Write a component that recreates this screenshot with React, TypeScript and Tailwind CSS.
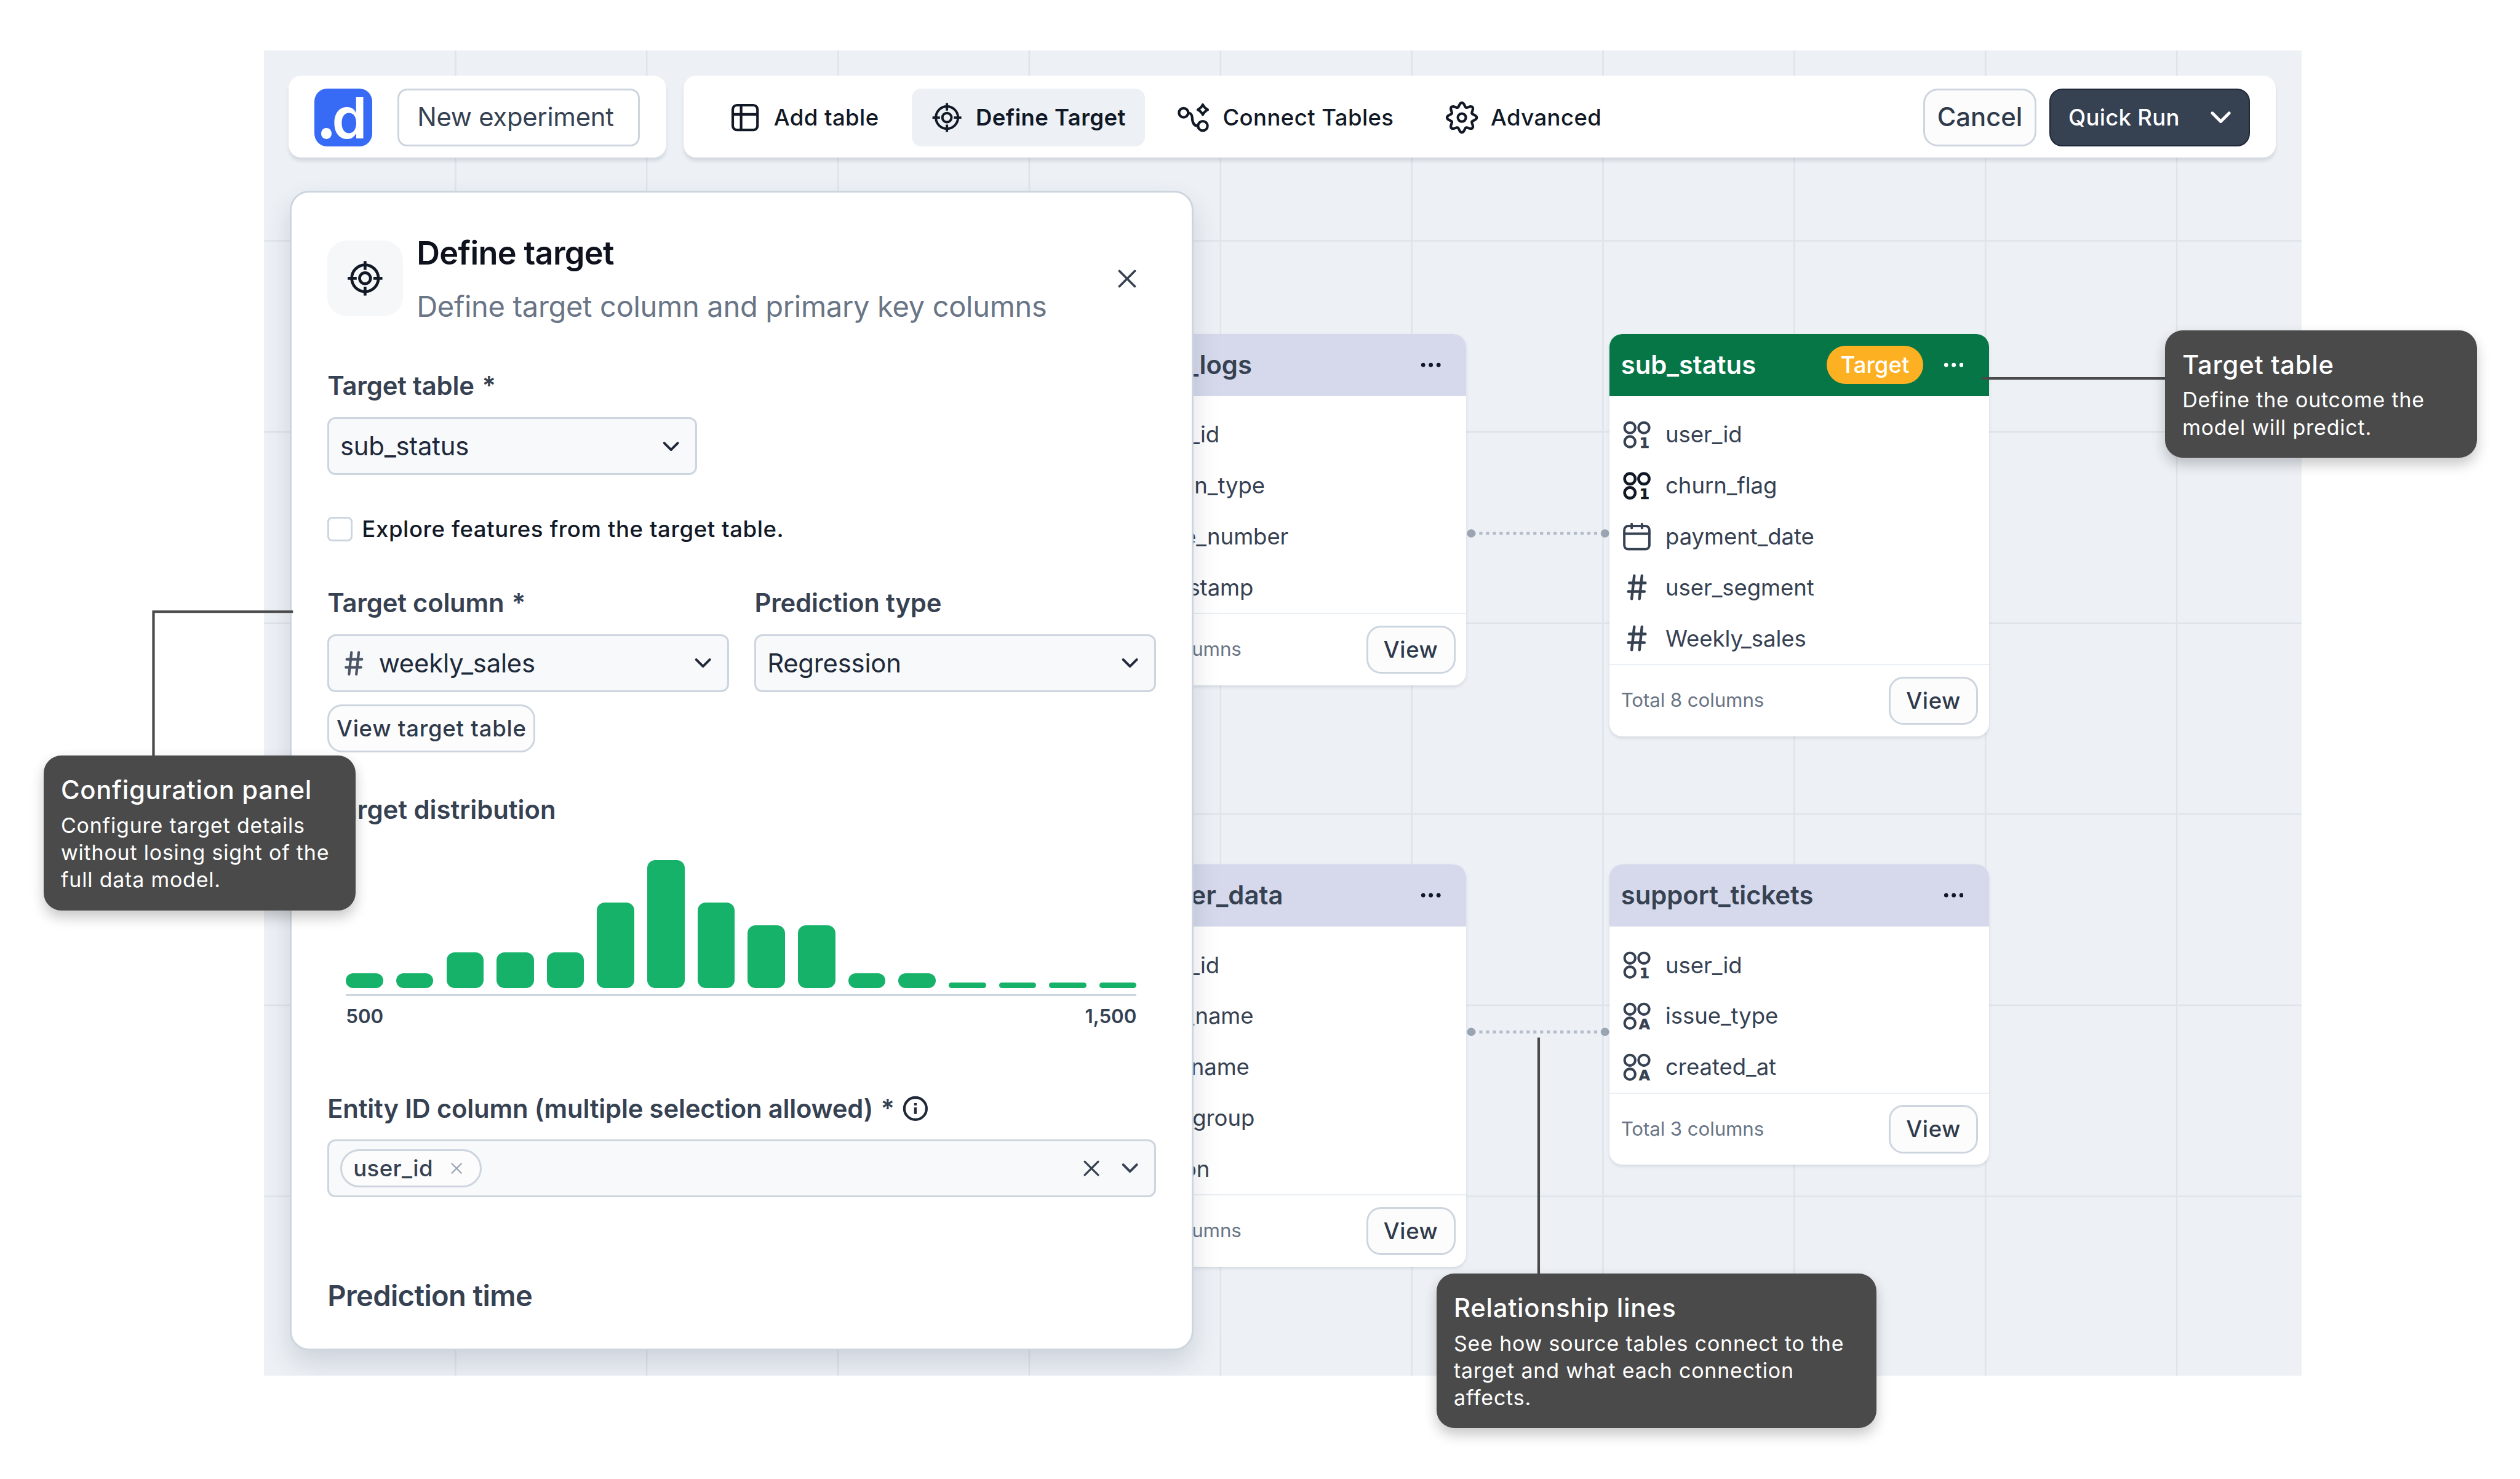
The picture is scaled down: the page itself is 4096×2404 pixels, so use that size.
import type { ReactNode } from 'react';

// Histogram of the target column, heights in px
const distribution = [9, 9, 22, 22, 22, 53, 79.5, 53, 39, 39, 9, 9, 3.3, 3.3, 3.3, 3.3];

type ColumnType = 'binary' | 'category' | 'date' | 'number';

interface Column {
  name: string;
  type: ColumnType;
  strong?: boolean;
}

interface TableCardProps {
  title: string;
  columns: Column[];
  total: number;
  isTarget?: boolean;
  className: string;
}

const subStatus: Column[] = [
  { name: 'user_id', type: 'binary' },
  { name: 'churn_flag', type: 'binary', strong: true },
  { name: 'payment_date', type: 'date' },
  { name: 'user_segment', type: 'number' },
  { name: 'Weekly_sales', type: 'number' },
];

const accessLogs: Column[] = [
  { name: 'user_id', type: 'binary' },
  { name: 'action_type', type: 'category' },
  { name: 'page_number', type: 'number' },
  { name: 'timestamp', type: 'date' },
];

const customerData: Column[] = [
  { name: 'user_id', type: 'binary' },
  { name: 'first_name', type: 'category' },
  { name: 'last_name', type: 'category' },
  { name: 'age_group', type: 'category' },
  { name: 'region', type: 'category' },
];

const supportTickets: Column[] = [
  { name: 'user_id', type: 'binary' },
  { name: 'issue_type', type: 'category' },
  { name: 'created_at', type: 'category' },
];

// Gear outline with 8 soft teeth
const gearPath =
  Array.from({ length: 160 }, (_, i) => {
    const a = (i / 160) * Math.PI * 2;
    const r = 8 + 1.25 * Math.cos(8 * a);
    return `${i === 0 ? 'M' : 'L'}${(10 + r * Math.cos(a)).toFixed(2)} ${(10 + r * Math.sin(a)).toFixed(2)}`;
  }).join('') + 'Z';

const TargetIcon = ({ className }: { className: string }) => (
  <svg viewBox="-12 -12 24 24" fill="none" stroke="currentColor" strokeWidth="1.8" className={className}>
    <circle r="8.3" />
    <circle r="3.4" />
    <path d="M0 -10.8V-5.2M0 10.8V5.2M-10.8 0H-5.2M10.8 0H5.2" />
  </svg>
);

const TableIcon = () => (
  <svg viewBox="0 0 20 20" fill="none" stroke="currentColor" strokeWidth="1.6" className="size-5">
    <rect x="2.3" y="2.3" width="15.4" height="15.4" rx="2.6" />
    <path d="M2.3 8H17.7M7.5 2.3V17.7" />
  </svg>
);

const ConnectIcon = () => (
  <svg viewBox="0 0 20 20" fill="none" stroke="currentColor" strokeWidth="1.6" strokeLinejoin="round" className="size-5">
    <circle cx="3.75" cy="7" r="2.85" />
    <circle cx="15.7" cy="15.2" r="2.95" />
    <path d="M6.6 7C8.1 7.2 9 8.3 9.1 10C9.2 13 10.2 15.2 12.7 15.2" />
    <path d="M15.7 2Q16.7 4.1 18.8 5.1Q16.7 6.1 15.7 8.2Q14.7 6.1 12.6 5.1Q14.7 4.1 15.7 2Z" />
  </svg>
);

const GearIcon = () => (
  <svg viewBox="0 0 20 20" fill="none" stroke="currentColor" strokeWidth="1.6" className="size-5 overflow-visible">
    <path d={gearPath} />
    <circle cx="10" cy="10" r="2.5" />
  </svg>
);

const ChevronDown = ({ className }: { className: string }) => (
  <svg viewBox="0 0 12 12" fill="none" stroke="currentColor" strokeWidth="1.5" strokeLinecap="round" strokeLinejoin="round" className={className}>
    <path d="M1.8 3.9L6 8.1L10.2 3.9" />
  </svg>
);

const CloseIcon = ({ className }: { className: string }) => (
  <svg viewBox="0 0 12 12" fill="none" stroke="currentColor" strokeWidth="1.5" strokeLinecap="round" className={className}>
    <path d="M1 1L11 11M11 1L1 11" />
  </svg>
);

const HashIcon = ({ className }: { className: string }) => (
  <svg viewBox="-9 -9 18 18" fill="none" stroke="currentColor" strokeWidth="1.7" strokeLinecap="round" className={className}>
    <path d="M-4.7 -2.65H5.3M-5.3 2.65H4.7M-1.6 -7.2L-3.2 7.2M3.2 -7.2L1.6 7.2" />
  </svg>
);

const ColumnIcon = ({ type, strong }: { type: ColumnType; strong?: boolean }) => {
  if (type === 'number') return <HashIcon className="size-[18px]" />;
  if (type === 'date') {
    return (
      <svg viewBox="0 0 18 18" fill="none" stroke="currentColor" strokeWidth="1.5" strokeLinecap="round" className="size-[18px]">
        <rect x="1.2" y="2.3" width="15.6" height="14.4" rx="2.4" />
        <path d="M1.2 7.1H16.8M5.8 1V3.6M12.2 1V3.6" />
      </svg>
    );
  }
  return (
    <svg viewBox="0 0 18 18" fill="none" stroke="currentColor" strokeWidth={strong ? 1.75 : 1.55} className={strong ? 'size-[18px] overflow-visible text-[#121926]' : 'size-[18px] overflow-visible'}>
      <circle cx="4.7" cy="4.7" r="3.3" />
      <circle cx="13.4" cy="4.7" r="3.3" />
      <circle cx="4.7" cy="13.4" r="3.3" />
      <text x="13.7" y="17.1" textAnchor="middle" fill="currentColor" strokeWidth="0.2" className="font-['DejaVu_Sans',sans-serif] text-[9px] font-bold">
        {type === 'binary' ? '1' : 'A'}
      </text>
    </svg>
  );
};

const OutlineButton = ({ children, className }: { children: ReactNode; className: string }) => (
  <button className={`flex items-center justify-center rounded-[9px] border-[1.2px] border-[#cdd5df] bg-[#fcfcfd] font-medium whitespace-nowrap text-[#2f3a4b] ${className}`}>
    {children}
  </button>
);

const NavItem = ({ icon, label, active }: { icon: ReactNode; label: string; active?: boolean }) => (
  <button
    className={`flex h-9 items-center gap-2 rounded-md px-3 text-sm tracking-[0.15px] text-[#121926] ${active ? 'bg-[#edf1f6] font-semibold' : 'font-medium'}`}
  >
    {icon}
    <span className="whitespace-nowrap">{label}</span>
  </button>
);

const Select = ({ value, icon }: { value: string; icon?: ReactNode }) => (
  <div className="flex h-9 items-center rounded-[5px] border-[1.2px] border-[#cdd5df] bg-[#f7f9fb] pr-[9px] pl-[6.8px] text-base tracking-[-0.08px] text-[#202939]">
    {icon}
    <span className="flex-1">{value}</span>
    <ChevronDown className="size-3" />
  </div>
);

const TableCard = ({ title, columns, total, isTarget, className }: TableCardProps) => (
  <div className={`absolute w-[236px] overflow-hidden rounded-lg bg-white shadow-[0_1px_2px_rgba(45,55,72,0.12)] ${className}`}>
    <div className={`flex h-[38.7px] items-center pr-4 pl-[7px] ${isTarget ? 'bg-[#067647] text-white' : 'bg-[#d5d9eb] text-[#364152]'}`}>
      <span className="flex-1 text-base font-semibold">{title}</span>
      {isTarget && (
        <span className="mr-[13px] flex h-6 w-[60px] items-center justify-center rounded-full bg-[#fdb022] text-sm font-medium text-white">
          Target
        </span>
      )}
      <svg viewBox="0 0 12 4" className={isTarget ? 'h-1 w-3' : 'h-1 w-3 text-[#121926]'} fill="currentColor">
        <circle cx="1.2" cy="2" r="1.3" />
        <circle cx="6" cy="2" r="1.3" />
        <circle cx="10.8" cy="2" r="1.3" />
      </svg>
    </div>
    <div className="pt-[8.2px]">
      {columns.map((column) => (
        <div key={column.name} className="flex h-[31.7px] items-center gap-[8.7px] pl-2 text-sm tracking-[-0.03px] text-[#364152]">
          <ColumnIcon type={column.type} strong={column.strong} />
          <span className="whitespace-nowrap">{column.name}</span>
        </div>
      ))}
    </div>
    <div className="flex h-[45px] items-center justify-between border-t border-[#eaeff5] pr-[6.8px] pl-[7px]">
      <span className="text-xs tracking-[-0.05px] text-[#697586]">Total {total} columns</span>
      <OutlineButton className="h-[30px] w-[55.5px] text-sm tracking-[0.22px]">View</OutlineButton>
    </div>
  </div>
);

const Callout = ({ title, children, className }: { title: string; children: ReactNode; className: string }) => (
  <div className={`absolute rounded-[11px] bg-[#4a4a4a] px-[10.8px] pt-[9.6px] text-white shadow-[0_4px_8px_rgba(0,0,0,0.22)] ${className}`}>
    <h3 className="text-base leading-6 font-medium tracking-[0.27px] whitespace-nowrap">{title}</h3>
    <p className="mt-[1.5px] text-[13px] leading-[17px] tracking-[0.31px] whitespace-nowrap">{children}</p>
  </div>
);

const Toolbar = () => (
  <header className="relative z-20 flex gap-[11px]">
    <div className="flex h-[51px] w-[235px] items-center gap-4 rounded-lg bg-white pt-px pl-4 shadow-[0_2px_2px_rgba(45,55,72,0.12)]">
      <div className="relative size-9 rounded-lg bg-[#386bf5] text-white">
        <span className="absolute bottom-[4.6px] left-[4.2px] size-[6.6px] rounded-full bg-white" />
        <span className="absolute top-0 left-[11px] text-[35px] leading-[37px] font-semibold">d</span>
      </div>
      <div className="flex h-9 w-[150.5px] items-center rounded-md border-[1.2px] border-[#cdd5df] pl-[11px] text-base tracking-[-0.1px] text-[#364152]">
        New experiment
      </div>
    </div>
    <div className="flex h-[51px] w-[990.5px] items-center justify-between rounded-lg bg-white px-4 pt-px shadow-[0_2px_2px_rgba(45,55,72,0.12)]">
      <nav className="flex gap-[8.3px]">
        <NavItem icon={<TableIcon />} label="Add table" />
        <NavItem icon={<TargetIcon className="size-5" />} label="Define Target" active />
        <NavItem icon={<ConnectIcon />} label="Connect Tables" />
        <NavItem icon={<GearIcon />} label="Advanced" />
      </nav>
      <div className="flex gap-2">
        <OutlineButton className="h-9 w-[70.2px] text-base">Cancel</OutlineButton>
        <button className="flex h-9 w-[125px] items-center justify-between rounded-lg border border-[#202939] bg-[#364152] pr-[10px] pl-[11.3px] text-sm font-medium tracking-[0.1px] text-white">
          Quick Run
          <ChevronDown className="size-[15px]" />
        </button>
      </div>
    </div>
  </header>
);

const ConfigPanel = () => (
  <section className="relative z-10 mt-[20.5px] ml-[0.8px] h-[721.6px] w-[562.4px] rounded-xl border-[1.2px] border-[#cdd5df] bg-white px-[22.3px] text-[#364152] shadow-[0_8px_16px_rgba(45,55,72,0.16)]">
    <div className="flex items-start pt-6">
      <div className="mt-[6px] flex size-[47px] items-center justify-center rounded-xl bg-[#f6f7f9] text-[#121926]">
        <TargetIcon className="size-6" />
      </div>
      <div className="ml-[8.5px] flex-1">
        <h2 className="text-xl leading-7 font-semibold tracking-[-0.25px] text-[#0d121c]">Define target</h2>
        <p className="mt-[5px] text-lg leading-7 tracking-[-0.12px] text-[#697586]">Define target column and primary key columns</p>
      </div>
      <CloseIcon className="mt-6 mr-[12.3px] size-[11.5px]" />
    </div>

    <h3 className="mt-[23.6px] text-base font-semibold tracking-[-0.08px]">
      Target table <span className="ml-[1px]">*</span>
    </h3>
    <div className="mt-[7.4px] w-[230px]">
      <Select value="sub_status" />
    </div>

    <label className="mt-[23.6px] flex items-center gap-[6px] text-sm font-medium tracking-[0.22px] text-[#121926]">
      <span className="size-[15.5px] rounded-[3px] border-[1.2px] border-[#cdd5df] bg-white" />
      Explore features from the target table.
    </label>

    <div className="mt-6 grid grid-cols-2 gap-4">
      <div>
        <h3 className="text-base font-semibold tracking-[-0.08px]">
          Target column <span className="ml-[0.8px]">*</span>
        </h3>
        <div className="mt-[7.4px]">
          <Select value="weekly_sales" icon={<HashIcon className="mr-[7px] size-[17px] text-[#4b5565]" />} />
        </div>
      </div>
      <div>
        <h3 className="text-base font-semibold tracking-[-0.08px]">Prediction type</h3>
        <div className="mt-[7.4px]">
          <Select value="Regression" />
        </div>
      </div>
    </div>
    <OutlineButton className="mt-[7.6px] h-[30px] w-[129.5px] text-sm tracking-[0.29px]">View target table</OutlineButton>

    <h3 className="mt-[23.7px] text-base font-semibold">Target distribution</h3>
    <div className="mt-[18.8px] ml-[11.5px] w-[492px]">
      <div className="flex h-[80px] items-end justify-between">
        {distribution.map((height, i) => (
          <div key={i} className="w-[23.2px] rounded-[5px] bg-[#17b26a]" style={{ height }} />
        ))}
      </div>
      <div className="mt-[4px] flex justify-between border-t-[1.2px] border-[#cdd5df] pt-[5px] text-xs font-semibold">
        <span>500</span>
        <span>1,500</span>
      </div>
    </div>

    <div className="mt-[37px] flex items-center gap-1.5">
      <h3 className="text-base font-semibold tracking-[-0.07px]">
        Entity ID column (multiple selection allowed) <span className="ml-[0.8px]">*</span>
      </h3>
      <svg viewBox="0 0 16 16" fill="none" stroke="currentColor" strokeWidth="1.6" className="-ml-px size-4 text-[#202939]">
        <circle cx="8" cy="8" r="6.9" />
        <path d="M8 7.3V11.4M8 4.6V6" />
      </svg>
    </div>
    <div className="mt-[7.2px] flex h-9 items-center rounded-[5px] border-[1.2px] border-[#cdd5df] bg-[#f7f9fb] pr-[9px] pl-[6.8px]">
      <span className="flex h-6 w-[88px] items-center justify-between rounded-full border-[1.2px] border-[#cdd5df] bg-[#fcfcfd] pr-[11px] pl-[7px] text-sm font-medium tracking-[0.14px]">
        user_id
        <CloseIcon className="size-[7px] text-[#9aa4b2]" />
      </span>
      <CloseIcon className="mr-[13px] ml-auto size-[10px]" />
      <ChevronDown className="size-3" />
    </div>

    <h3 className="mt-[47.2px] text-lg font-semibold tracking-[-0.23px]">Prediction time</h3>
  </section>
);

const CanvasLines = () => (
  <svg className="absolute inset-0 h-full w-full" fill="none">
    <g stroke="#dfe4eb" strokeWidth="1">
      {Array.from({ length: 10 }, (_, i) => (
        <line key={`v${i}`} x1={119.2 + i * 119} x2={119.2 + i * 119} y1="0" y2="825" />
      ))}
      {Array.from({ length: 6 }, (_, i) => (
        <line key={`h${i}`} x1="0" x2="1268" y1={118.5 + i * 118.9} y2={118.5 + i * 118.9} />
      ))}
    </g>
    {[300.5, 610.7].map((y) => (
      <g key={y} fill="#9aa4b2">
        <line x1="752" x2="834" y1={y} y2={y} stroke="#b4bdc9" strokeWidth="1.8" strokeDasharray="2 2.2" />
        <circle cx="751.2" cy={y} r="2.6" />
        <circle cx="834.4" cy={y} r="2.6" />
      </g>
    ))}
  </svg>
);

const App = () => {
  return (
    <div className="relative h-[920.3px] w-[1568px] overflow-hidden bg-white pt-[31.2px] pl-[164.2px] font-['Inter',sans-serif] [zoom:2.61225]">
      <main className="relative h-[824.6px] w-[1267.8px] overflow-hidden bg-[#edf1f6] pt-[15.8px] pl-[15.3px]">
        <CanvasLines />
        <TableCard title="access_logs" columns={accessLogs} total={6} className="top-[176.5px] left-[512.2px]" />
        <TableCard title="customer_data" columns={customerData} total={8} className="top-[506.6px] left-[512.2px]" />
        <TableCard title="sub_status" columns={subStatus} total={8} isTarget className="top-[176.5px] left-[837.4px]" />
        <TableCard title="support_tickets" columns={supportTickets} total={3} className="top-[506.6px] left-[837.4px]" />
        <Toolbar />
        <ConfigPanel />
      </main>

      {/* Leader lines of the callouts */}
      <svg className="absolute inset-0 z-20 h-full w-full" fill="none" stroke="#4a4a4a" strokeWidth="1.6">
        <path d="M95.5 471V380.6H182.3" />
        <path d="M1233.5 235.5H1348" />
        <path d="M957.4 645.6V793" />
      </svg>

      <Callout title="Configuration panel" className="top-[470.1px] left-[27.1px] z-30 h-[96.4px] w-[194.1px]">
        Configure target details
        <br />
        without losing sight of the
        <br />
        full data model.
      </Callout>
      <Callout title="Target table" className="top-[205.5px] left-[1347.1px] z-30 h-[79.5px] w-[194px]">
        Define the outcome the
        <br />
        model will predict.
      </Callout>
      <Callout title="Relationship lines" className="top-[792.4px] left-[893.8px] z-30 h-[96.1px] w-[273.8px]">
        See how source tables connect to the
        <br />
        target and what each connection
        <br />
        affects.
      </Callout>
    </div>
  );
};

export default App;
